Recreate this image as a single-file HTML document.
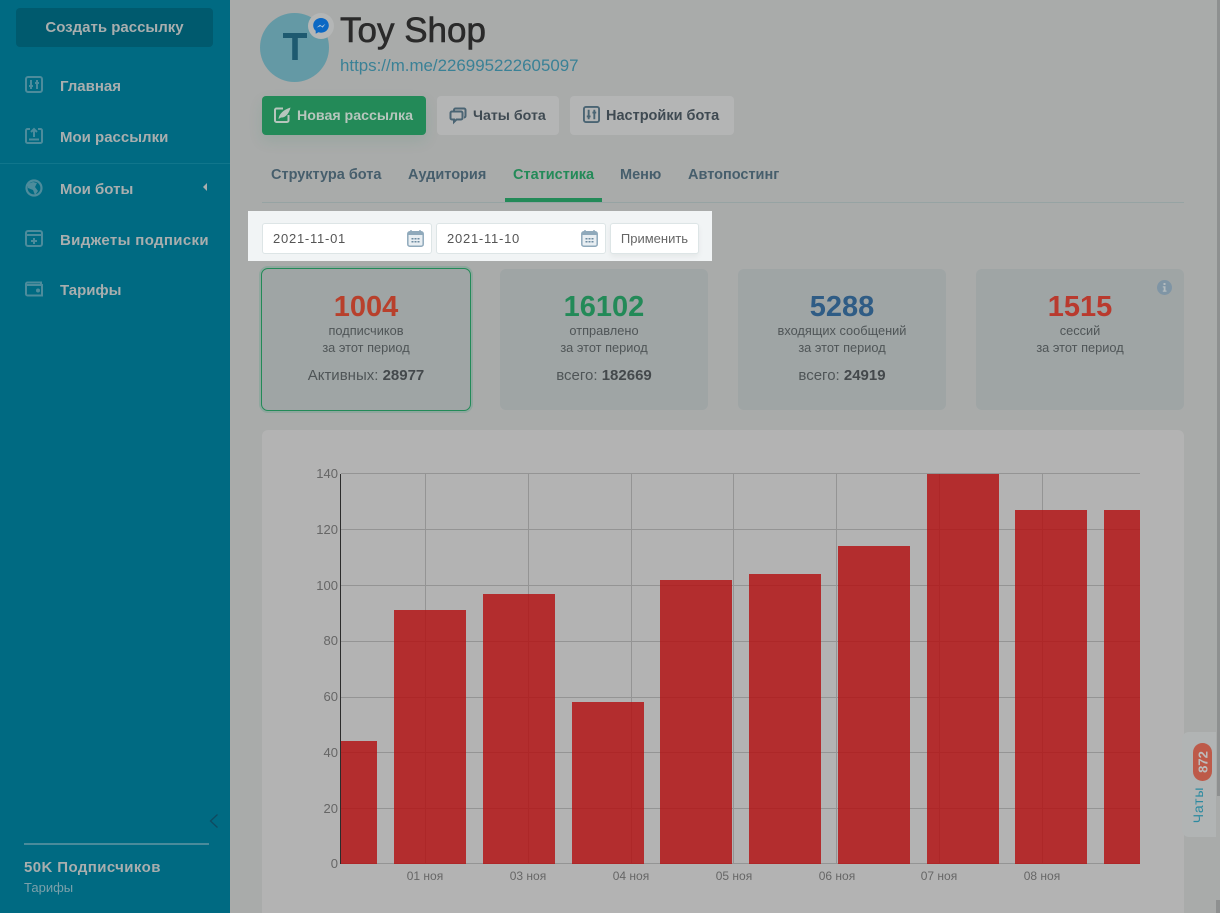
<!DOCTYPE html>
<html><head><meta charset="utf-8">
<style>
html,body{margin:0;padding:0}
body{width:1220px;height:913px;overflow:hidden;position:relative;background:#a9abaa;font-family:"Liberation Sans","DejaVu Sans",sans-serif}
.a{position:absolute;white-space:nowrap}
.side{left:0;top:0;width:230px;height:913px;background:#006a82}
.mi{left:60px;font-size:15px;font-weight:700;color:#a9aeae;line-height:20px}
.ic{left:25px;width:18px;height:18px}
.btn{height:39px;top:96px;border-radius:4px;background:#b4b5b5;font-size:14.200px;font-weight:700;color:#3f4a52;line-height:39px}
.btn span{top:1px}
.tab{top:165px;font-size:14.500px;font-weight:700;color:#465e6c;line-height:20px}
.inp{top:223px;height:29px;width:168px;background:#fff;border:1px solid #dde5e6;border-radius:3px;font-size:13px;color:#555;line-height:29px;text-indent:10px;letter-spacing:.75px}
.card{top:269px;height:141px;width:208px;background:#9fa5a5;border-radius:6px;text-align:center;color:#4f5557}
.num{position:absolute;left:0;right:0;top:21px;font-size:29px;font-weight:700;line-height:34px}
.l1{position:absolute;left:0;right:0;top:53px;font-size:12.800px;line-height:17px}
.l2{position:absolute;left:0;right:0;top:97px;font-size:15px;line-height:20px}
.l2 b{color:#44494c}
.yl{font-size:13px;color:#666;width:30px;text-align:right;left:308px;line-height:14px}
.xl{font-size:12px;color:#666;line-height:14px;width:80px;text-align:center;top:869px}
</style></head><body>

<div class="a side"></div>
<div class="a" style="left:16px;top:8px;width:197px;height:39px;background:#005a6e;border-radius:4px;text-align:center;font-size:15px;font-weight:700;color:#a9aeae;line-height:40px">Создать рассылку</div>

<svg class="a ic" style="top:76px" viewBox="0 0 18 18" fill="none" stroke="#4d8c9c" stroke-width="2"><rect x="1" y="1" width="16" height="15" rx="2"/><path d="M6 4v9M12 4v9M4 10h4M10 7h4"/></svg>
<div class="a mi" style="top:77px">Главная</div>
<svg class="a ic" style="top:127px" viewBox="0 0 18 18" fill="none" stroke="#4d8c9c" stroke-width="2"><path d="M5 2H2.500A1.500 1.500 0 0 0 1 3.500v11A1.500 1.500 0 0 0 2.500 16h13a1.500 1.500 0 0 0 1.500-1.500v-11A1.500 1.500 0 0 0 15.500 2H13M9 10V2M6 5l3-3 3 3M4 12.500h10"/></svg>
<div class="a mi" style="top:128px">Мои рассылки</div>
<div class="a" style="left:0;top:163px;width:230px;height:1px;background:#10768c"></div>
<svg class="a ic" style="top:179px" viewBox="0 0 18 18"><circle cx="9" cy="9" r="7.500" fill="none" stroke="#4d8c9c" stroke-width="2.200"/><path d="M3 5l5-2 4 1-2 4 3 4-3 4-2-5-5-2z" fill="#4d8c9c"/></svg>
<div class="a mi" style="top:180px">Мои боты</div>
<div class="a" style="left:203px;top:183px;width:0;height:0;border-style:solid;border-width:4px 4px 4px 0;border-color:transparent #a9aeae transparent transparent"></div>
<svg class="a ic" style="top:230px" viewBox="0 0 18 18" fill="none" stroke="#4d8c9c" stroke-width="2"><rect x="1" y="1" width="16" height="15" rx="2"/><path d="M1 5h16M9 8v6M6 11h6"/></svg>
<div class="a mi" style="top:231px;letter-spacing:.35px">Виджеты подписки</div>
<svg class="a ic" style="top:280px" viewBox="0 0 18 18" fill="none" stroke="#4d8c9c" stroke-width="2"><path d="M16 5V2.500H2.500A1.500 1.500 0 0 0 1 4v10a1.500 1.500 0 0 0 1.500 1.500H17V5H2"/><circle cx="13" cy="10.500" r="1" fill="#4d8c9c"/></svg>
<div class="a mi" style="top:281px">Тарифы</div>

<svg class="a" style="left:208px;top:813px" width="12" height="16" viewBox="0 0 12 16" fill="none" stroke="#0f4a60" stroke-width="1.300"><path d="M9.500 1.500L2.500 8l7 6.500"/></svg>
<div class="a" style="left:24px;top:843px;width:185px;height:2px;background:#4a8b9b"></div>
<div class="a" style="left:24px;top:858px;font-size:15px;font-weight:700;color:#a9aeae;line-height:20px;letter-spacing:.4px">50K Подписчиков</div>
<div class="a" style="left:24px;top:879px;font-size:13px;color:#7ba0aa;line-height:17px">Тарифы</div>

<div class="a" style="left:260px;top:13px;width:69px;height:69px;border-radius:50%;background:#6499a5"></div>
<svg class="a" style="left:283px;top:33px" width="24" height="27" viewBox="0 0 24 27"><title>T</title><path d="M0 0h24v5H14.800v22H9.200V5H0z" fill="#1e5a70"/></svg>
<div class="a" style="left:308px;top:13px;width:26px;height:26px;border-radius:50%;background:#b4b6b6"></div>
<svg class="a" style="left:312px;top:17px" width="18" height="18" viewBox="0 0 18 18"><path d="M9 1C4.600 1 1.200 4.200 1.200 8.400c0 2.200.9 4.100 2.500 5.400v3l2.700-1.500c.8.200 1.700.4 2.600.4 4.400 0 7.800-3.200 7.800-7.300S13.400 1 9 1z" fill="#0b68c4"/><path d="M4.500 10.600L8 7.800l2 1.500 3.500-2.500-2.800 3.800-2-1.500z" fill="#a9c6df"/></svg>
<div class="a" style="left:340px;top:11px;font-size:35px;color:#2a2a2a;line-height:40px;-webkit-text-stroke:.6px #2a2a2a">Toy Shop</div>
<div class="a" style="left:340px;top:56px;font-size:16.900px;color:#3a8196;line-height:20px">https://m.me/226995222605097</div>

<div class="a btn" style="left:262px;width:164px;background:#238a58;color:#b7c6bd;box-shadow:0 6px 14px rgba(35,138,88,.12)"><span style="position:absolute;left:35px">Новая рассылка</span></div>
<svg class="a" style="left:274px;top:106px" width="18" height="18" viewBox="0 0 18 18" fill="none" stroke="#b7c6bd" stroke-width="2"><path d="M9 2.500H2.500A1.500 1.500 0 0 0 1 4v10.500A1.500 1.500 0 0 0 2.500 16H13a1.500 1.500 0 0 0 1.500-1.500V9"/><path d="M4.500 13C5 8 9 4 16.500 1.500 15 8 11 12 7 11.500z" fill="#b7c6bd" stroke="none"/></svg>
<div class="a btn" style="left:437px;width:122px"><span style="position:absolute;left:36px">Чаты бота</span></div>
<svg class="a" style="left:449px;top:107px" width="18" height="18" viewBox="0 0 18 18" fill="none" stroke="#4a6473" stroke-width="2"><path d="M5 3.500V3a1.500 1.500 0 0 1 1.500-1.500H15A1.500 1.500 0 0 1 16.500 3v6a1.500 1.500 0 0 1-1.500 1.500M3 4.500h9A1.500 1.500 0 0 1 13.500 6v5a1.500 1.500 0 0 1-1.500 1.500H7.500L5 15v-2.500H3A1.500 1.500 0 0 1 1.500 11V6A1.500 1.500 0 0 1 3 4.500z"/></svg>
<div class="a btn" style="left:570px;width:164px;font-size:14.500px"><span style="position:absolute;left:36px">Настройки бота</span></div>
<svg class="a" style="left:583px;top:106px" width="17" height="17" viewBox="0 0 18 18" fill="none" stroke="#4a6473" stroke-width="2"><rect x="1" y="1" width="16" height="16" rx="2"/><path d="M6 4v10M12 4v10M4 11h4M10 7h4"/></svg>

<div class="a tab" style="left:271px">Структура бота</div>
<div class="a tab" style="left:408px">Аудитория</div>
<div class="a tab" style="left:513px;color:#238a58">Статистика</div>
<div class="a tab" style="left:620px">Меню</div>
<div class="a tab" style="left:688px">Автопостинг</div>
<div class="a" style="left:262px;top:202px;width:922px;height:1px;background:#96a3a3"></div>
<div class="a" style="left:505px;top:198px;width:97px;height:4px;background:#238a58"></div>

<div class="a" style="left:248px;top:211px;width:464px;height:50px;background:#f1f4f5"></div>
<div class="a inp" style="left:262px">2021-11-01</div>
<div class="a inp" style="left:436px">2021-11-10</div>
<svg class="a" style="left:407px;top:229px" width="17" height="18" viewBox="0 0 17 18"><rect x=".8" y="2.800" width="15.400" height="14.400" rx="2" fill="#e8eef2" stroke="#8fa9bb" stroke-width="1.500"/><path d="M1 3h15v3H1z" fill="#8fa9bb"/><path d="M4 1v3M13 1v3" stroke="#8fa9bb" stroke-width="1.500"/><path d="M4.500 9h2v1.500h-2zM7.500 9h2v1.500h-2zM10.500 9h2v1.500h-2zM4.500 12h2v1.500h-2zM7.500 12h2v1.500h-2zM10.500 12h2v1.500h-2z" fill="#6c8ba0"/></svg>
<svg class="a" style="left:581px;top:229px" width="17" height="18" viewBox="0 0 17 18"><rect x=".8" y="2.800" width="15.400" height="14.400" rx="2" fill="#e8eef2" stroke="#8fa9bb" stroke-width="1.500"/><path d="M1 3h15v3H1z" fill="#8fa9bb"/><path d="M4 1v3M13 1v3" stroke="#8fa9bb" stroke-width="1.500"/><path d="M4.500 9h2v1.500h-2zM7.500 9h2v1.500h-2zM10.500 9h2v1.500h-2zM4.500 12h2v1.500h-2zM7.500 12h2v1.500h-2zM10.500 12h2v1.500h-2z" fill="#6c8ba0"/></svg>
<div class="a" style="left:610px;top:223px;width:87px;height:29px;background:#fff;border:1px solid #dde5e6;border-radius:3px;text-align:center;font-size:13px;color:#666;line-height:29px;box-shadow:0 3px 6px rgba(0,0,0,.05)">Применить</div>

<div class="a card" style="left:261px;width:210px;box-sizing:border-box;height:143px;top:268px;border:1px solid #238a58;box-shadow:0 0 0 2px #8fa79e;border-radius:7px"><div class="num" style="color:#b8402c">1004</div><div class="l1">подписчиков<br>за этот период</div><div class="l2">Активных: <b>28977</b></div></div>
<div class="a card" style="left:500px"><div class="num" style="color:#238a58">16102</div><div class="l1">отправлено<br>за этот период</div><div class="l2">всего: <b>182669</b></div></div>
<div class="a card" style="left:738px"><div class="num" style="color:#2f5c85">5288</div><div class="l1">входящих сообщений<br>за этот период</div><div class="l2">всего: <b>24919</b></div></div>
<div class="a card" style="left:976px"><div class="num" style="color:#b93a2e">1515</div><div class="l1">сессий<br>за этот период</div></div>
<svg class="a" style="left:1157px;top:280px" width="15" height="15" viewBox="0 0 15 15"><circle cx="7.500" cy="7.500" r="7.500" fill="#7f95a5"/><path d="M6.500 3h2v2h-2zM5.800 6.300h2.700v4.200h1v1.200H5.800v-1.200h.9V7.500h-.9z" fill="#b4bcbf"/></svg>

<div class="a" style="left:262px;top:430px;width:922px;height:483px;background:#b3b3b3;border-radius:6px 6px 0 0"></div>

<svg class="a" style="left:300px;top:460px" width="860" height="420" viewBox="300 460 860 420">
<g stroke="#949494" stroke-width="1" shape-rendering="crispEdges">
<path d="M341 473.500H1140M341 529.500H1140M341 585.500H1140M341 641.500H1140M341 697.500H1140M341 752.500H1140M341 808.500H1140M341 863.500H1140"/>
<path d="M425.500 474V864M528.500 474V864M631.500 474V864M733.500 474V864M836.500 474V864M939.500 474V864M1042.500 474V864"/>
</g>
<g fill="rgb(179,11,13)" fill-opacity=".8">
<rect x="341" y="741" width="36" height="123"/>
<rect x="394" y="610" width="72" height="254"/>
<rect x="483" y="594" width="72" height="270"/>
<rect x="572" y="702" width="72" height="162"/>
<rect x="660" y="580" width="72" height="284"/>
<rect x="749" y="574" width="72" height="290"/>
<rect x="838" y="546" width="72" height="318"/>
<rect x="927" y="474" width="72" height="390"/>
<rect x="1015" y="510" width="72" height="354"/>
<rect x="1104" y="510" width="36" height="354"/>
</g>
<path d="M340.500 474V864" stroke="#2b2b2b" stroke-width="1" shape-rendering="crispEdges"/>
</svg>

<div class="a yl" style="top:467px">140</div>
<div class="a yl" style="top:523px">120</div>
<div class="a yl" style="top:579px">100</div>
<div class="a yl" style="top:634px">80</div>
<div class="a yl" style="top:690px">60</div>
<div class="a yl" style="top:746px">40</div>
<div class="a yl" style="top:802px">20</div>
<div class="a yl" style="top:857px">0</div>

<div class="a xl" style="left:385px">01 ноя</div>
<div class="a xl" style="left:488px">03 ноя</div>
<div class="a xl" style="left:591px">04 ноя</div>
<div class="a xl" style="left:694px">05 ноя</div>
<div class="a xl" style="left:797px">06 ноя</div>
<div class="a xl" style="left:899px">07 ноя</div>
<div class="a xl" style="left:1002px">08 ноя</div>

<div class="a" style="left:1217px;top:0;width:3px;height:796px;background:#8e9090"></div>
<div class="a" style="left:1216px;top:900px;width:4px;height:13px;background:#8e9090"></div>
<div class="a" style="left:1182px;top:732px;width:34px;height:105px;background:#b1b4b4;border-radius:7px 0 0 7px"></div>
<div class="a" style="left:1193px;top:743px;width:19px;height:38px;background:#bd5a49;border-radius:10px"></div>
<div class="a" style="left:1193px;top:743px;width:19px;height:38px;"><div style="position:absolute;left:50%;top:50%;transform:translate(-50%,-50%) rotate(-90deg);font-size:13px;font-weight:700;color:#bdbdbd;white-space:nowrap">872</div></div>
<div class="a" style="left:1190px;top:787px;width:16px;height:36px;"><div style="position:absolute;left:50%;top:50%;transform:translate(-50%,-50%) rotate(-90deg);font-size:14px;letter-spacing:.8px;color:#2c8aa0;white-space:nowrap">Чаты</div></div>

</body></html>
